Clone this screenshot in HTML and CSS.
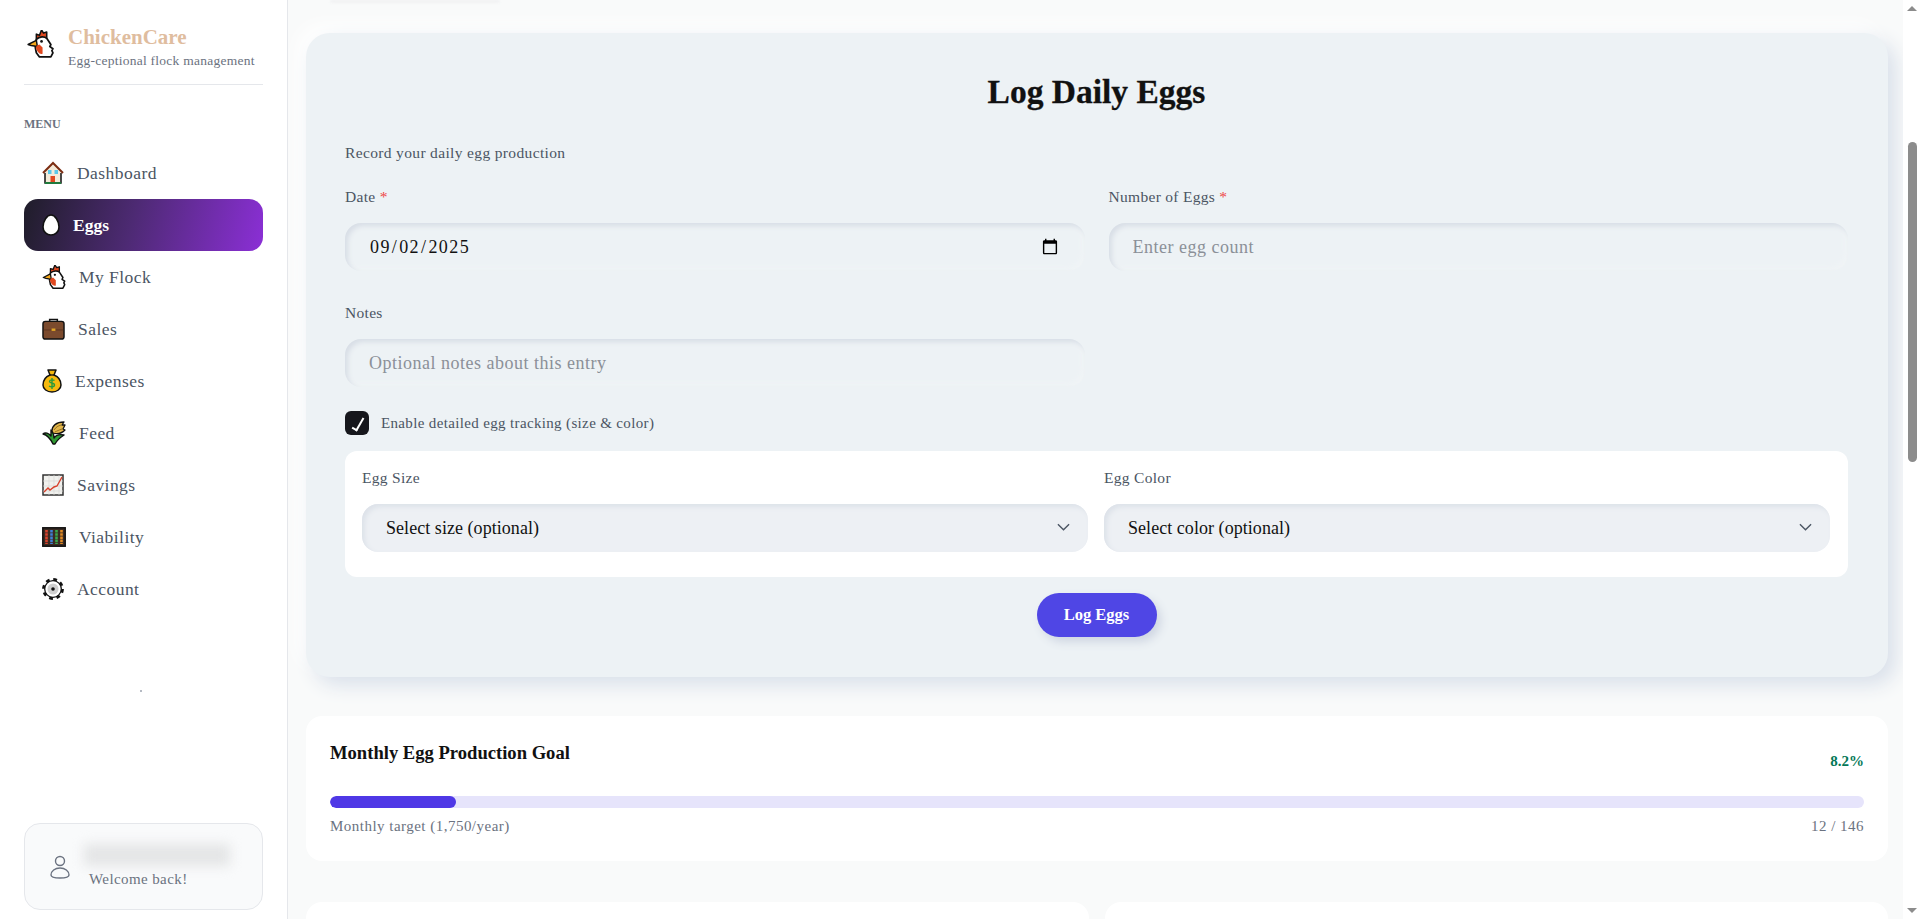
FILE: index.html
```html
<!DOCTYPE html>
<html lang="en">
<head>
  <meta charset="UTF-8" />
  <title>ChickenCare - Eggs</title>
  <link rel="stylesheet" href="styles.css">
</head>
<body>

  <svg class="defs" width="0" height="0">
    <symbol id="chicken" viewBox="0 0 26 28">
      <path d="M9 9V4l3 1 2-5 2 3 3-1v6z" fill="#e0481f" stroke="#111" stroke-width="1.500" stroke-linejoin="round"/>
      <path d="M9 9c3-3 8-3 10-1l4 6-1 2 3 2-1 2 1 2-2 4H12l-3-4-1-5z" fill="#fff" stroke="#111" stroke-width="1.700" stroke-linejoin="round"/>
      <path d="M9 10l-8 4 3 1 6 1z" fill="#f5a81c" stroke="#111" stroke-width="1.400" stroke-linejoin="round"/>
      <path d="M9.500 15 8.500 17c1 4 3.500 7 6.500 6v-6l-3-3z" fill="#e0481f"/>
      <circle cx="14" cy="11" r="1.300" fill="#111"/>
    </symbol>
  </svg>

  <div class="app">
    <aside class="sidebar">
      <div class="brand">
        <svg class="brand-icon" width="27" height="29"><use href="#chicken"/></svg>
        <div>
          <div class="brand-name">ChickenCare</div>
          <div class="brand-tag">Egg-ceptional flock management</div>
        </div>
      </div>

      <div class="menu-title">MENU</div>

      <nav class="nav">
        <a class="nav-item">
          <svg width="22" height="24" viewBox="0 0 22 24">
            <path d="M3 11v11h16V11" fill="#f4ead8" stroke="#111" stroke-width="1.500"/>
            <path d="M1 12 11 2l10 10" fill="#f4ead8" stroke="#7c2d12" stroke-width="2"/>
            <rect x="6" y="9" width="3.500" height="4" fill="#5bc8e8"/>
            <rect x="12.500" y="9" width="3.500" height="4" fill="#5bc8e8"/>
            <rect x="8.500" y="15" width="4.500" height="7" fill="#e0481f"/>
            <rect x="3" y="21" width="16" height="2" fill="#1f7a3d"/>
          </svg>
          <span>Dashboard</span>
        </a>
        <a class="nav-item active">
          <svg width="18" height="22" viewBox="0 0 18 22">
            <path d="M9 1c4 0 8 6 8 12 0 5-4 8-8 8s-8-3-8-8C1 7 5 1 9 1z" fill="#fff" stroke="#111" stroke-width="1.600"/>
          </svg>
          <span>Eggs</span>
        </a>
        <a class="nav-item">
          <svg width="24" height="25"><use href="#chicken"/></svg>
          <span>My Flock</span>
        </a>
        <a class="nav-item">
          <svg width="23" height="22" viewBox="0 0 24 23">
            <path d="M8 4V1.500h8V4" fill="none" stroke="#111" stroke-width="1.600"/>
            <rect x="1" y="3.500" width="22" height="18.500" rx="2.500" fill="#7b4a2d" stroke="#111" stroke-width="1.500"/>
            <rect x="1.800" y="12" width="20.400" height="1" fill="#5c3520"/>
            <rect x="10" y="11" width="4" height="2.500" fill="#e0a526"/>
          </svg>
          <span>Sales</span>
        </a>
        <a class="nav-item">
          <svg width="20" height="24" viewBox="0 0 20 24">
            <path d="M6 1h8l-2 5c5 2 7 6 7 10 0 4-4 7-9 7s-9-3-9-7c0-4 2-8 7-10z" fill="#f5b90f" stroke="#111" stroke-width="1.500" stroke-linejoin="round"/>
            <path d="M7 6h6" stroke="#111" stroke-width="1.300"/>
            <path d="M12.500 11.500c-1-1-5-1-5 1s5 1 5 3.500-4 2-5.500 1M10 9v11" fill="none" stroke="#2a9a3c" stroke-width="1.400"/>
          </svg>
          <span>Expenses</span>
        </a>
        <a class="nav-item">
          <svg width="24" height="24" viewBox="0 0 24 24">
            <path d="M11 23C9 19 6 14 1 13c2-2 6-1 8 2V9c2 2 3 5 3 8 2-3 5-4 10-3-3 2-7 5-9 9z" fill="#2f9a32" stroke="#111" stroke-width="1.400" stroke-linejoin="round"/>
            <path d="M10 10c0-5 4-9 12-9l-2 3h3l-2 4 2 1c-4 4-9 4-12 3z" fill="#e3b64a" stroke="#111" stroke-width="1.300" stroke-linejoin="round"/>
            <path d="M12 9c2-3 4-4 7-5M13 11c2-1 4-2 7-3" fill="none" stroke="#8a6a1e" stroke-width=".9"/>
          </svg>
          <span>Feed</span>
        </a>
        <a class="nav-item">
          <svg width="22" height="22" viewBox="0 0 22 22">
            <rect x="1" y="1" width="20" height="20" fill="#f1f1ee" stroke="#333" stroke-width="1.500"/>
            <path d="M1 7h20M1 12h20M1 17h20M7 1v20M12 1v20M17 1v20" stroke="#d9d9d6" stroke-width=".7"/>
            <path d="M2 18l4-4 2 2 4-3 3-1 5-9" fill="none" stroke="#d8412c" stroke-width="1.400"/>
          </svg>
          <span>Savings</span>
        </a>
        <a class="nav-item">
          <svg width="24" height="20" viewBox="0 0 24 20">
            <rect x=".8" y=".8" width="22.400" height="18.400" fill="#3a2a22" stroke="#111" stroke-width="1.500"/>
            <path d="M4.500 3v14" stroke="#d8412c" stroke-width="2.600" stroke-dasharray="2.500 .7"/>
            <path d="M9.500 3v14" stroke="#3f7fd8" stroke-width="2.600" stroke-dasharray="2.500 .7"/>
            <path d="M14.500 3v14" stroke="#38a84a" stroke-width="2.600" stroke-dasharray="2.500 .7"/>
            <path d="M19.500 3v14" stroke="#e08a24" stroke-width="2.600" stroke-dasharray="2.500 .7"/>
          </svg>
          <span>Viability</span>
        </a>
        <a class="nav-item">
          <svg width="22" height="22" viewBox="0 0 22 22">
            <circle cx="11" cy="11" r="9.300" fill="none" stroke="#111" stroke-width="3.200" stroke-dasharray="3.650 3.650"/>
            <circle cx="11" cy="11" r="8.300" fill="#fff" stroke="#111" stroke-width="1.300"/>
            <circle cx="11" cy="11" r="5.500" fill="#cfcfcf"/>
            <circle cx="11" cy="11" r="1.800" fill="#111"/>
          </svg>
          <span>Account</span>
        </a>
      </nav>

      <div class="dot"></div>

      <div class="user-card">
        <svg width="20" height="24" viewBox="0 0 20 24" fill="none" stroke="#6b7280" stroke-width="1.400">
          <circle cx="10" cy="6" r="4.500"/>
          <path d="M10 13c-5 0-9 3-9 7 0 2 3 3 9 3s9-1 9-3c0-4-4-7-9-7z"/>
        </svg>
        <div class="user-text">
          <div class="user-blur"></div>
          <div class="user-welcome">Welcome back!</div>
        </div>
      </div>
    </aside>

    <main class="main">
      <div class="top-sliver"></div>

      <section class="log-card">
        <h1>Log Daily Eggs</h1>
        <p class="intro">Record your daily egg production</p>

        <div class="grid-two">
          <div class="field">
            <label>Date <span class="req">*</span></label>
            <input class="soft-input" type="date" value="2025-09-02">
          </div>
          <div class="field">
            <label>Number of Eggs <span class="req">*</span></label>
            <input class="soft-input" type="text" placeholder="Enter egg count">
          </div>
          <div class="field">
            <label>Notes</label>
            <input class="soft-input" type="text" placeholder="Optional notes about this entry">
          </div>
        </div>

        <label class="check-row">
          <input type="checkbox" checked>
          <span>Enable detailed egg tracking (size &amp; color)</span>
        </label>

        <div class="detail-panel">
          <div class="field">
            <label>Egg Size</label>
            <div class="select-wrap">
              <select><option>Select size (optional)</option></select>
              <svg width="13" height="8" viewBox="0 0 14 8" fill="none" stroke="#4b5563" stroke-width="1.500"><path d="M1 1l6 6 6-6"/></svg>
            </div>
          </div>
          <div class="field">
            <label>Egg Color</label>
            <div class="select-wrap">
              <select><option>Select color (optional)</option></select>
              <svg width="13" height="8" viewBox="0 0 14 8" fill="none" stroke="#4b5563" stroke-width="1.500"><path d="M1 1l6 6 6-6"/></svg>
            </div>
          </div>
        </div>

        <div class="submit-row"><button>Log Eggs</button></div>
      </section>

      <section class="goal-card">
        <div class="goal-head">
          <h3>Monthly Egg Production Goal</h3>
          <span class="goal-pct">8.2%</span>
        </div>
        <div class="bar"><div class="bar-fill" style="width:8.2%"></div></div>
        <div class="goal-foot">
          <span>Monthly target (1,750/year)</span>
          <span>12 / 146</span>
        </div>
      </section>

      <div class="bottom-row">
        <section class="stub-card"></section>
        <section class="stub-card"></section>
      </div>
    </main>

    <div class="scrollbar">
      <div class="arrow-up"></div>
      <div class="thumb"></div>
      <div class="arrow-down"></div>
    </div>
  </div>

</body>
</html>
```

FILE: styles.css
```css
* {
  box-sizing: border-box;
}
html, body {
  margin: 0;
  height: 100%;
  overflow: hidden;
}
body {
  font-family: "Liberation Serif", serif;
  background-color: #f9fafa;
  color: #4b5563;
}
.defs {
  position: absolute;
}
.app {
  display: flex;
  height: 919px;
}

/* sidebar */
.sidebar {
  width: 288px;
  flex-shrink: 0;
  background: #fff;
  border-right: 1px solid #e5e7eb;
  padding: 0 24px 9px;
  display: flex;
  flex-direction: column;
}
.brand {
  height: 85px;
  display: flex;
  align-items: center;
  gap: 14px;
  border-bottom: 1px solid #e5e7eb;
  padding: 10px 0 0 3px;
}
.brand-icon {
  margin-bottom: 6px;
  flex-shrink: 0;
}
.brand-name {
  font-size: 21px;
  font-weight: bold;
  line-height: 26px;
  color: #dfbd9f;
  margin-bottom: 2px;
}
.brand-tag {
  font-size: 13.500px;
  line-height: 18px;
  color: #6b7280;
  white-space: nowrap;
  letter-spacing: .25px;
}
.menu-title {
  font-size: 12px;
  font-weight: bold;
  line-height: 16px;
  color: #6b7280;
  margin-top: 31px;
  margin-bottom: 15px;
}
.nav {
  display: flex;
  flex-direction: column;
}
.nav-item {
  height: 52px;
  display: flex;
  align-items: center;
  gap: 13px;
  padding-left: 18px;
  font-size: 17.500px;
  letter-spacing: .45px;
  border-radius: 14px;
  color: #4b5563;
}
.nav-item.active {
  background: linear-gradient(105deg, #1f1d29 0%, #4d2a73 45%, #8b2fd6 100%);
  color: #fff;
  font-weight: bold;
  letter-spacing: 0;
}
.dot {
  width: 2px;
  height: 2px;
  border-radius: 50%;
  background: #9ca3af;
  margin: 75px 0 0 116px;
}
.user-card {
  margin-top: auto;
  height: 87px;
  background: #f9fafb;
  border: 1px solid #e5e7eb;
  border-radius: 16px;
  display: flex;
  align-items: center;
  padding: 0 0 0 25px;
  gap: 19px;
}
.user-text {
  display: flex;
  flex-direction: column;
}
.user-blur {
  width: 146px;
  height: 22px;
  background: #e4e5e6;
  filter: blur(6px);
  margin-left: -5px;
  margin-bottom: 3px;
}
.user-welcome {
  font-size: 15px;
  letter-spacing: .4px;
  line-height: 20px;
  color: #6b7280;
}

/* main column */
.main {
  flex: 1;
  min-width: 0;
  padding: 0 15px 0 18px;
  overflow: hidden;
}
.top-sliver {
  width: 170px;
  height: 3px;
  margin-left: 24px;
  background: #f1f2f3;
  border-radius: 0 0 10px 10px;
  filter: blur(1px);
}
.log-card {
  margin-top: 30px;
  height: 644px;
  background: #edf2f5;
  border-radius: 24px;
  padding: 40px 40px 40px 39px;
  box-shadow: 8px 8px 20px #d9e0ea, -8px -8px 20px #fff;
}
.log-card h1 {
  margin: 0;
  font-size: 33.500px;
  line-height: 38px;
  font-weight: bold;
  text-align: center;
  color: #111;
  -webkit-text-stroke: .3px #111;
}
.intro {
  margin: 32px 0 24px;
  font-size: 15.500px;
  line-height: 20px;
  letter-spacing: .35px;
}
.grid-two {
  display: grid;
  grid-template-columns: 1fr 1fr;
  column-gap: 24px;
  row-gap: 32px;
}
.field label {
  display: block;
  font-size: 15.500px;
  line-height: 20px;
  letter-spacing: .3px;
  margin-bottom: 16px;
}
.req {
  color: #ef4444;
}
.soft-input {
  display: block;
  width: 100%;
  height: 48px;
  border: none;
  outline: none;
  border-radius: 16px;
  background: #edf2f5;
  padding: 0 24px;
  font-family: inherit;
  font-size: 18px;
  letter-spacing: .5px;
  color: #111;
  box-shadow: inset 3px 3px 5px #d8dee6, inset -3px -3px 5px #f0f4f6;
}
.soft-input::placeholder {
  color: #8b9098;
}
input[type="date"].soft-input {
  letter-spacing: 1.400px;
}
.check-row {
  display: flex;
  align-items: center;
  gap: 12px;
  height: 24px;
  margin-top: 24px;
  font-size: 15px;
  letter-spacing: .35px;
}
.check-row input {
  appearance: none;
  width: 24px;
  height: 24px;
  margin: 0;
  background: #16171c;
  border-radius: 6px;
  position: relative;
}
.check-row input::after {
  content: "";
  position: absolute;
  left: 10px;
  top: 5px;
  width: 4px;
  height: 13px;
  border: solid #fff;
  border-width: 0 2px 2px 0;
  transform: rotate(30deg);
}
.detail-panel {
  margin-top: 16px;
  height: 126px;
  background: #fff;
  border-radius: 12px;
  padding: 10px 18px 0 17px;
  display: grid;
  grid-template-columns: 1fr 1fr;
  column-gap: 16px;
}
.detail-panel .field {
  padding-top: 7px;
}
.select-wrap {
  position: relative;
}
.select-wrap select {
  appearance: none;
  display: block;
  width: 100%;
  height: 48px;
  border: none;
  outline: none;
  border-radius: 16px;
  background: #edf0f4;
  padding: 0 24px;
  font-family: inherit;
  font-size: 18px;
  letter-spacing: .05px;
  color: #111;
  box-shadow: inset 3px 3px 5px #dde2e9;
}
.select-wrap svg {
  position: absolute;
  right: 18px;
  top: 19px;
}
.submit-row {
  margin-top: 16px;
  text-align: center;
}
.submit-row button {
  width: 120px;
  height: 44px;
  border: none;
  border-radius: 22px;
  background: #4f46e5;
  color: #fff;
  font-family: inherit;
  font-size: 16.500px;
  font-weight: bold;
  box-shadow: 4px 5px 10px #cfd6e2;
}

/* goal */
.goal-card {
  margin-top: 39px;
  height: 145px;
  background: #fff;
  border-radius: 16px;
  padding: 27px 24px 0;
}
.goal-head {
  display: flex;
  justify-content: space-between;
  height: 53px;
}
.goal-head h3 {
  margin: 0;
  font-size: 18.600px;
  line-height: 20px;
  color: #111;
}
.goal-pct {
  margin-top: 8px;
  font-size: 15px;
  line-height: 20px;
  font-weight: bold;
  color: #047857;
}
.bar {
  height: 12px;
  background: #e6e4fb;
  border-radius: 6px;
  overflow: hidden;
}
.bar-fill {
  height: 100%;
  background: #4f38e6;
  border-radius: 6px;
}
.goal-foot {
  display: flex;
  justify-content: space-between;
  margin-top: 8px;
  font-size: 15px;
  line-height: 20px;
  letter-spacing: .48px;
  color: #6b7280;
}

.bottom-row {
  margin-top: 41px;
  display: grid;
  grid-template-columns: 1fr 1fr;
  column-gap: 16px;
}
.stub-card {
  height: 200px;
  background: #fff;
  border-radius: 16px;
}

/* page scrollbar, the shot is taken part way down */
.scrollbar {
  width: 17px;
  flex-shrink: 0;
  background: #fff;
  position: relative;
}
.arrow-up, .arrow-down {
  position: absolute;
  left: 4px;
  width: 0;
  height: 0;
  border-left: 5px solid transparent;
  border-right: 5px solid transparent;
}
.arrow-up {
  top: 6px;
  border-bottom: 5px solid #8c8c8c;
}
.arrow-down {
  bottom: 6px;
  border-top: 5px solid #8c8c8c;
}
.thumb {
  position: absolute;
  left: 5px;
  top: 142px;
  width: 9px;
  height: 320px;
  border-radius: 5px;
  background: #8c8c8c;
}
```
